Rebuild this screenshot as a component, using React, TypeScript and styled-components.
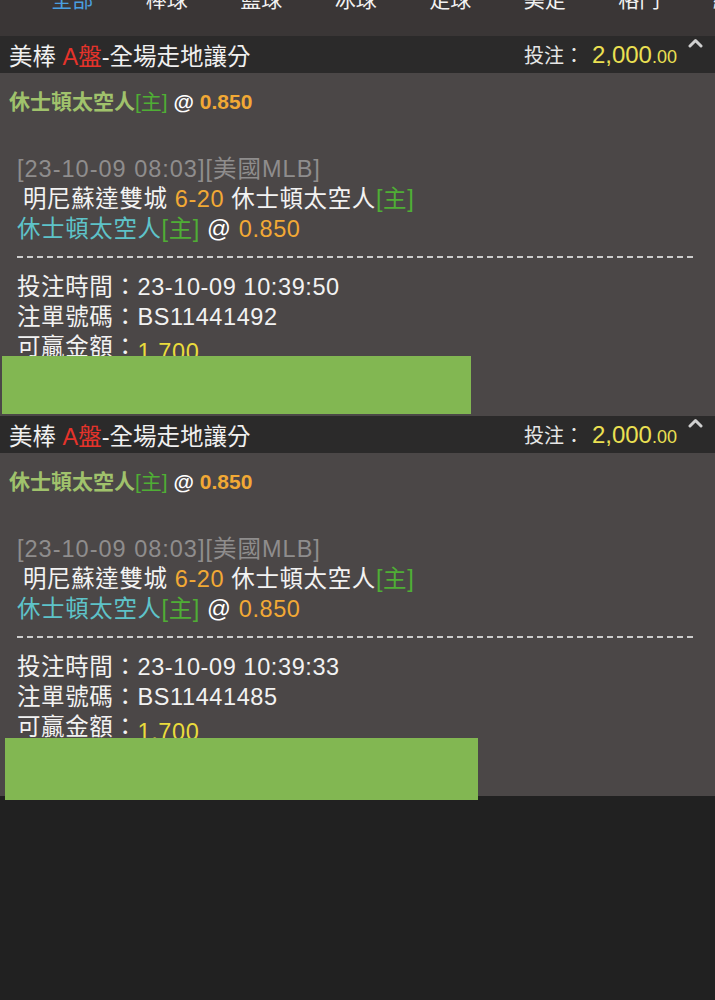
import React from "react";
import styled, { createGlobalStyle } from "styled-components";

const Global = createGlobalStyle`
  html, body { margin: 0; padding: 0; background: #212121; }
  body { font-family: "Liberation Sans", "Noto Sans CJK TC", sans-serif; }
`;

const Page = styled.div`
  width: 715px;
  min-height: 1000px;
  background: #212121;
  display: flex;
  flex-direction: column;
  overflow: hidden;
`;

const TabBar = styled.nav`
  height: 36px;
  flex: 0 0 36px;
  background: #3a3636;
  display: flex;
  padding-left: 25px;
  overflow: hidden;
`;

const Tab = styled.div<{ $active?: boolean }>`
  flex: 0 0 94.5px;
  text-align: center;
  font-size: 21px;
  line-height: 21px;
  margin-top: -11px;
  white-space: nowrap;
  color: ${(p) => (p.$active ? "#4a9fe0" : "#f2f2f2")};
`;

const Card = styled.section`
  position: relative;
  display: flex;
  flex-direction: column;
`;

const CardHeader = styled.header`
  height: 37px;
  background: #2b2a2a;
  display: flex;
  align-items: center;
  padding-left: 9px;
`;

const Title = styled.h2`
  margin: 0;
  flex: 1;
  font-size: 23.5px;
  font-weight: normal;
  color: #f0f0f0;
  white-space: nowrap;
`;

const Red = styled.span`
  color: #e5332a;
`;

const StakeLabel = styled.span`
  font-size: 20px;
  color: #e6e6e6;
`;

const StakeValue = styled.span`
  font-size: 24px;
  color: #ebe052;
  margin-left: 8px;
`;

const Cents = styled.span`
  font-size: 18px;
`;

const Caret = styled.svg`
  align-self: flex-start;
  margin: 2px 12px 0 11px;
`;

const Body = styled.div`
  height: 343px;
  box-sizing: border-box;
  background: #4b4747;
  padding-top: 15px;
`;

const Pick = styled.div`
  padding-left: 9px;
  font-size: 21px;
  font-weight: bold;
  line-height: 28px;
  color: #a0c26c;
  white-space: nowrap;
`;

const Home = styled.span`
  color: #4fae35;
  font-weight: normal;
`;

const White = styled.span`
  color: #ffffff;
`;

const Orange = styled.span`
  color: #f2a935;
`;

const Detail = styled.div`
  margin-top: 38px;
  padding: 0 18px 0 17px;
  font-size: 23.5px;
  letter-spacing: 0.6px;
  line-height: 30px;
  color: #f2f2f2;
  white-space: nowrap;
`;

const Stamp = styled.div`
  color: #8f8d8d;
  letter-spacing: 1px;
`;

const Match = styled.div`
  padding-left: 6px;
`;

const Selection = styled.div`
  color: #5ec3c9;
`;

const Dash = styled.div`
  height: 2px;
  margin: 12px 0 14px;
  background: repeating-linear-gradient(to right, #cdcdcd 0 6px, transparent 6px 10px);
`;

const InfoRow = styled.div``;

const Win = styled.span`
  color: #eadc3c;
  vertical-align: -5px;
`;

const Redact = styled.div<{ $top: number; $left: number; $w: number; $h: number }>`
  position: absolute;
  top: ${(p) => p.$top}px;
  left: ${(p) => p.$left}px;
  width: ${(p) => p.$w}px;
  height: ${(p) => p.$h}px;
  background: #82b752;
`;

type Bet = {
  time: string;
  id: string;
  redact: { top: number; left: number; w: number; h: number };
};

const bets: Bet[] = [
  { time: "23-10-09 10:39:50", id: "BS11441492", redact: { top: 320, left: 2, w: 469, h: 58 } },
  { time: "23-10-09 10:39:33", id: "BS11441485", redact: { top: 322, left: 5, w: 473, h: 62 } },
];

const tabs = ["全部", "棒球", "籃球", "冰球", "足球", "美足", "格鬥", "網球"];

const BetCard: React.FC<{ bet: Bet }> = ({ bet }) => (
  <Card>
    <CardHeader>
      <Title>
        美棒 <Red>A盤</Red>-全場走地讓分
      </Title>
      <StakeLabel>投注：</StakeLabel>
      <StakeValue>
        2,000<Cents>.00</Cents>
      </StakeValue>
      <Caret width="15" height="10" viewBox="0 0 15 10">
        <polyline
          points="2,8 7.5,2.5 13,8"
          fill="none"
          stroke="#cfcfcf"
          strokeWidth="3"
          strokeLinecap="round"
          strokeLinejoin="round"
        />
      </Caret>
    </CardHeader>
    <Body>
      <Pick>
        休士頓太空人<Home>[主]</Home> <White>@</White> <Orange>0.850</Orange>
      </Pick>
      <Detail>
        <Stamp>[23-10-09 08:03][美國MLB]</Stamp>
        <Match>
          明尼蘇達雙城 <Orange>6-20</Orange> 休士頓太空人<Home>[主]</Home>
        </Match>
        <Selection>
          休士頓太空人<Home>[主]</Home> <White>@</White> <Orange>0.850</Orange>
        </Selection>
        <Dash />
        <InfoRow>投注時間：{bet.time}</InfoRow>
        <InfoRow>注單號碼：{bet.id}</InfoRow>
        <InfoRow>
          可贏金額：<Win>1,700</Win>
        </InfoRow>
      </Detail>
    </Body>
    <Redact $top={bet.redact.top} $left={bet.redact.left} $w={bet.redact.w} $h={bet.redact.h} />
  </Card>
);

export default function App() {
  return (
    <>
      <Global />
      <Page>
        <TabBar>
          {tabs.map((t, i) => (
            <Tab key={t} $active={i === 0}>
              {t}
            </Tab>
          ))}
        </TabBar>
        {bets.map((b) => (
          <BetCard key={b.id} bet={b} />
        ))}
      </Page>
    </>
  );
}
